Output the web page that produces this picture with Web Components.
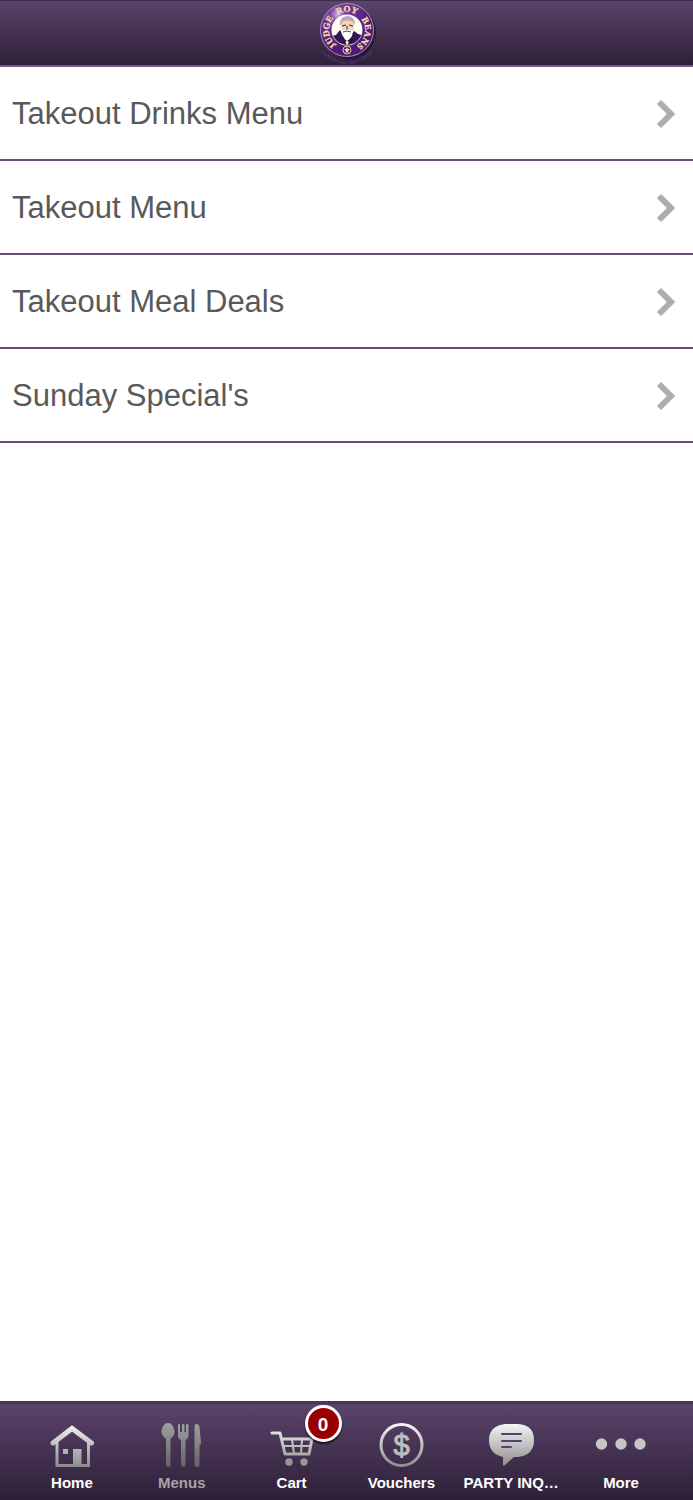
<!DOCTYPE html>
<html lang="en">
<head>
<meta charset="utf-8">
<meta name="viewport" content="width=device-width, initial-scale=1">
<title>Judge Roy Beans</title>
<style>
  body {
    margin: 0;
    background: #fff;
    font-family: "Liberation Sans", Arial, sans-serif;
  }
</style>
</head>
<body>
<rb-app>
  <rb-header slot="header"></rb-header>
  <rb-menu-item href="#drinks">Takeout Drinks Menu</rb-menu-item>
  <rb-menu-item href="#menu">Takeout Menu</rb-menu-item>
  <rb-menu-item href="#deals">Takeout Meal Deals</rb-menu-item>
  <rb-menu-item href="#sunday">Sunday Special's</rb-menu-item>
  <rb-tab-bar slot="footer">
    <rb-tab icon="home" href="#home">Home</rb-tab>
    <rb-tab icon="menus" href="#menus" active>Menus</rb-tab>
    <rb-tab icon="cart" href="#cart" badge="0">Cart</rb-tab>
    <rb-tab icon="vouchers" href="#vouchers">Vouchers</rb-tab>
    <rb-tab icon="party" href="#party">PARTY INQ…</rb-tab>
    <rb-tab icon="more" href="#more">More</rb-tab>
  </rb-tab-bar>
</rb-app>

<script>
class RbApp extends HTMLElement {
  constructor() {
    super();
    this.attachShadow({ mode: 'open' });
  }

  connectedCallback() {
    this.shadowRoot.innerHTML = `
      <style>
        :host {
          display: flex;
          flex-direction: column;
          min-height: 100vh;
        }
        main { flex: 1; }
      </style>
      <slot name="header"></slot>
      <main><slot></slot></main>
      <slot name="footer"></slot>
    `;
  }
}

class RbHeader extends HTMLElement {
  constructor() {
    super();
    this.attachShadow({ mode: 'open' });
  }

  connectedCallback() {
    this.shadowRoot.innerHTML = `
      <style>
        :host { display: block; }
        header {
          display: flex;
          justify-content: center;
          background: linear-gradient(#5b436b, #2d2036);
          border-top: 1px solid #402e4c;
          border-bottom: 2px solid #725783;
        }
        svg { display: block; }
      </style>
      <header>
        <svg width="72" height="64" viewBox="-36 -29 72 64" role="img" aria-label="Judge Roy Beans">
          <defs>
            <path id="ring" d="M0 18A18 18 0 0 1 0-18A18 18 0 0 1 0 18"/>
            <path id="under" d="M-34 0A34 34 0 0 0 34 0"/>
            <radialGradient id="disc" cx="0.32" cy="0.2" r="0.6">
              <stop offset="0" stop-color="#d9b4ea"/>
              <stop offset="0.25" stop-color="#7b3fa0"/>
              <stop offset="1" stop-color="#4f1a7c"/>
            </radialGradient>
            <clipPath id="inner"><circle r="15"/></clipPath>
          </defs>
          <circle cx="2" cy="2" r="27" fill="#1f1228" opacity="0.7"/>
          <circle r="27" fill="#a68ab8"/>
          <circle r="26" fill="url(#disc)"/>
          <g font-family="Liberation Serif, serif" font-weight="700" font-size="9" fill="#f4dfa6" stroke="#f4dfa6" stroke-width="0.3" text-anchor="middle">
            <text><textPath href="#ring" startOffset="23%">JUDGE</textPath></text>
            <text><textPath href="#ring" startOffset="50%">ROY</textPath></text>
            <text><textPath href="#ring" startOffset="78%">BEANS</textPath></text>
          </g>
          <!-- portrait -->
          <circle r="15.5" fill="#fffdf2"/>
          <g clip-path="url(#inner)">
            <path d="M-15 6L-11 5L-7 0L-4 4L3 5L7 1L11 4L15 5V16H-15Z" fill="#35164f"/>
            <path d="M-4 4L0 16L5 4Z" fill="#fff"/>
            <path d="M-6-7Q-5-13 1-13Q7-12 7-6L6 2Q4 6 0 6Q-4 5-5 0Z" fill="#f0d5b0"/>
            <path d="M-7-4Q-8-13 0-14Q8-14 8-5L6-8Q2-11-4-9Z" fill="#b9a5c1"/>
            <path d="M-5-4L-1-5M2-5L6-4M0-4V0" stroke="#41234f" stroke-width="1" fill="none"/>
            <path d="M-6 1Q0-2 6 1L5 6Q2 11-1 9Q-5 7-6 1Z" fill="#fff"/>
            <path d="M-4 2Q0 0 4 2" stroke="#56405f" fill="none"/>
            <path d="M-3 9L0 11L4 8L5 13L0 11L-4 13Z" fill="#28103c"/>
          </g>
          <circle cy="20" r="4" fill="none" stroke="#e4c88d" stroke-width="1"/>
          <path d="M0 17L1 19L3 19L1 21L2 23L0 22L-2 23L-1 21L-3 19L-1 19Z" fill="#f4dfa6"/>
          <text font-size="5" fill="#63378a" text-anchor="middle"><textPath href="#under" startOffset="50%">Coffeehouse • Bar • Venue</textPath></text>
        </svg>
      </header>
    `;
  }
}

class RbMenuItem extends HTMLElement {
  constructor() {
    super();
    this.attachShadow({ mode: 'open' });
  }

  connectedCallback() {
    this.shadowRoot.innerHTML = `
      <style>
        :host { display: block; }
        a {
          display: flex;
          align-items: center;
          justify-content: space-between;
          padding: 29px 17px 27px 12px;
          border-bottom: 2px solid #674c76;
          color: #595959;
          font-size: 31px;
          line-height: 36px;
          text-decoration: none;
        }
        svg { flex: none; }
      </style>
      <a href="${this.getAttribute('href')}">
        <slot></slot>
        <svg width="20" height="30" viewBox="0 0 20 30" aria-hidden="true">
          <path d="M3 3L15 15L3 27" fill="none" stroke="#adadad" stroke-width="6"/>
        </svg>
      </a>
    `;
  }
}

class RbTabBar extends HTMLElement {
  constructor() {
    super();
    this.attachShadow({ mode: 'open' });
  }

  connectedCallback() {
    this.shadowRoot.innerHTML = `
      <style>
        :host { display: block; }
        nav {
          display: flex;
          padding: 17px 17px 8px;
          background: linear-gradient(#5b436b, #2d2036);
          border-top: 3px solid #493554;
        }
      </style>
      <nav><slot></slot></nav>
    `;
  }
}

// 52x48 icons, filled from light at the top to grey at the bottom
const icons = {
  home: `
    <path d="M11 20V44.5H42.5V20" fill="none" stroke="url(#shade)" stroke-width="3"/>
    <path d="M7 22L26 7.500L45.500 22" fill="none" stroke="url(#shade)" stroke-width="5" stroke-linecap="round"/>
    <path d="M17 28h5v5h-5zM27 28h8.500v16H27z" fill="url(#shade)"/>`,
  menus: `
    <path d="M12 2C16 2 18.500 7 18.500 11C18.500 14 17 16 14.500 17.500V44Q14.500 46 12.300 46Q10 46 10 44V17.500C7.500 16 5.500 14 5.500 11C5.500 7 8 2 12 2Z" fill="url(#shade)"/>
    <path d="M22 4Q22 3 23 3T24 4V11H26V4Q26 3 27 3T28.500 4V11H30V4Q30 3 31 3T32.500 4V14Q32.500 18 29.500 19V44Q29.500 46 27.300 46T25 44V19Q22 18 22 14Z" fill="url(#shade)"/>
    <path d="M38.500 5Q38.500 3 40.500 3Q43 3 43.500 6L45 22Q45 24 43.500 24V44Q43.500 46 41 46T38.500 44Z" fill="url(#shade)"/>`,
  cart: `
    <path d="M6 12H14L19 33H43L46 18H16" fill="none" stroke="url(#shade)" stroke-width="3" stroke-linejoin="round" stroke-linecap="round"/>
    <path d="M17 25H45M26 18L28 33M36 18L35 33" fill="none" stroke="url(#shade)" stroke-width="2"/>
    <circle cx="23" cy="41" r="3.700" fill="#979797"/><circle cx="38" cy="41" r="3.700" fill="#979797"/>`,
  vouchers: `
    <circle cx="26.500" cy="24" r="20.500" fill="none" stroke="url(#shade)" stroke-width="3"/>
    <text x="26.500" y="34" font-size="29" font-weight="400" text-anchor="middle" fill="#bdbdbd" stroke="#bdbdbd" stroke-width="1">$</text>`,
  party: `
    <path d="M20 3H33Q49 4 49 19T33 36H29L20 44Q18 46 18 43V36Q4 33 4 19T20 3Z" fill="url(#shade)"/>
    <path d="M17 13H36M17 20H36M17 26H26" stroke="#594267" stroke-width="2" stroke-linecap="round"/>`,
  more: `
    <g fill="#c6c6c6"><circle cx="6.500" cy="23" r="5.700"/><circle cx="26" cy="23" r="5.700"/><circle cx="45" cy="23" r="5.700"/></g>`
};

class RbTab extends HTMLElement {
  constructor() {
    super();
    this.attachShadow({ mode: 'open' });
  }

  connectedCallback() {
    const active = this.hasAttribute('active');
    const badge = this.getAttribute('badge');
    this.shadowRoot.innerHTML = `
      <style>
        :host { display: block; flex: 1; min-width: 0; }
        a {
          display: flex;
          flex-direction: column;
          align-items: center;
          gap: 5px;
          color: ${active ? '#a5a2a7' : '#fff'};
          font-size: 15px;
          font-weight: 700;
          line-height: 18px;
          white-space: nowrap;
          text-decoration: none;
        }
        .icon { position: relative; }
        svg { display: block; }
        .badge {
          position: absolute;
          top: -16px;
          right: -24px;
          box-sizing: border-box;
          width: 37px;
          height: 37px;
          border: 3px solid #fff;
          border-radius: 50%;
          background: #990000;
          box-shadow: 0 2px 2px rgba(0, 0, 0, 0.7);
          color: #fff;
          font-size: 19px;
          line-height: 33px;
          text-align: center;
        }
      </style>
      <a href="${this.getAttribute('href')}"${active ? ' aria-current="page"' : ''}>
        <span class="icon">
          <svg width="52" height="48" viewBox="0 0 52 48" aria-hidden="true">
            <defs>
              <linearGradient id="shade" gradientUnits="userSpaceOnUse" x1="0" y1="3" x2="0" y2="46">
                <stop offset="0" stop-color="${active ? '#a0a0a0' : '#f4f4f4'}"/>
                <stop offset="1" stop-color="${active ? '#636363' : '#8c8c8c'}"/>
              </linearGradient>
            </defs>
            ${icons[this.getAttribute('icon')]}
          </svg>
          ${badge !== null ? `<span class="badge">${badge}</span>` : ''}
        </span>
        <slot></slot>
      </a>
    `;
  }
}

customElements.define('rb-app', RbApp);
customElements.define('rb-header', RbHeader);
customElements.define('rb-menu-item', RbMenuItem);
customElements.define('rb-tab-bar', RbTabBar);
customElements.define('rb-tab', RbTab);
</script>
</body>
</html>
